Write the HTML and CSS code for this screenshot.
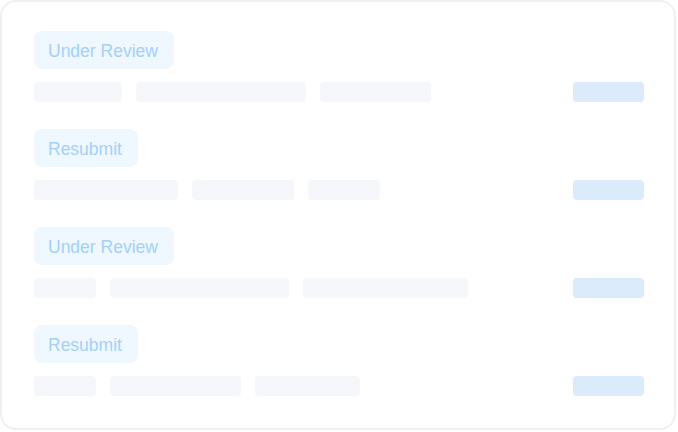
FILE: index.html
```html
<!DOCTYPE html>
<html>
<head>
<meta charset="utf-8">
<link rel="stylesheet" href="styles.css">
</head>
<body>
<div class="card">
  <div class="group">
    <div class="badge">Under Review</div>
    <div class="row">
      <div class="bar" style="width:88px"></div>
      <div class="bar" style="width:170px"></div>
      <div class="bar" style="width:111px"></div>
      <div class="bar action"></div>
    </div>
  </div>
  <div class="group">
    <div class="badge">Resubmit</div>
    <div class="row">
      <div class="bar" style="width:144px"></div>
      <div class="bar" style="width:102px"></div>
      <div class="bar" style="width:72px"></div>
      <div class="bar action"></div>
    </div>
  </div>
  <div class="group">
    <div class="badge">Under Review</div>
    <div class="row">
      <div class="bar" style="width:62px"></div>
      <div class="bar" style="width:179px"></div>
      <div class="bar" style="width:165px"></div>
      <div class="bar action"></div>
    </div>
  </div>
  <div class="group">
    <div class="badge">Resubmit</div>
    <div class="row">
      <div class="bar" style="width:62px"></div>
      <div class="bar" style="width:131px"></div>
      <div class="bar" style="width:105px"></div>
      <div class="bar action"></div>
    </div>
  </div>
</div>
</body>
</html>
```
FILE: styles.css
```css
html, body {
  margin: 0;
  padding: 0;
  background: #ffffff;
}
.card {
  box-sizing: border-box;
  width: 676px;
  height: 430px;
  border: 2px solid #eef0f4;
  border-radius: 16px;
  padding: 29px 30px 0 32px;
  display: flex;
  flex-direction: column;
  gap: 27px;
  font-family: "Liberation Sans", Arial, sans-serif;
}
.group {
  display: flex;
  flex-direction: column;
  align-items: flex-start;
  gap: 13px;
}
.badge {
  height: 38px;
  box-sizing: border-box;
  display: flex;
  align-items: center;
  padding: 2px 16px 0 14px;
  background: #eff7ff;
  color: #a3d1fb;
  font-size: 17.5px;
  border-radius: 8px;
}
.row {
  display: flex;
  gap: 14px;
  width: 100%;
  align-items: center;
}
.bar {
  height: 20px;
  background: #f5f7fb;
  border-radius: 4px;
  flex: none;
}
.bar.action {
  margin-left: auto;
  width: 71px;
  background: #dcebfc;
}
```
